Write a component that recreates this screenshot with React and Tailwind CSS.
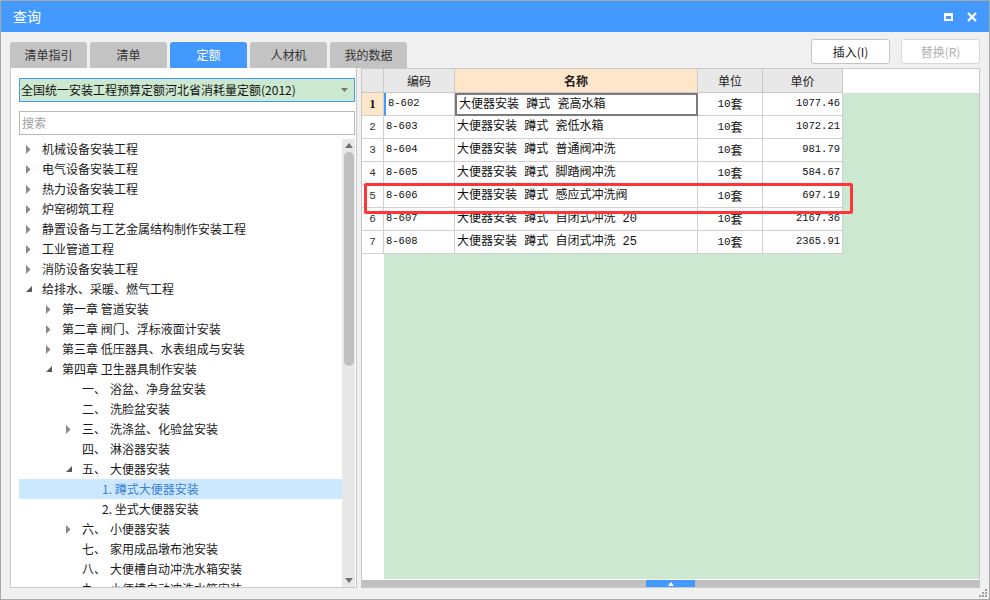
import React from "react";

const CJK = { fontFamily: '"Noto Sans CJK SC", "Noto Sans", sans-serif' };
const MONO = { fontFamily: '"Liberation Mono", "Noto Sans CJK SC", monospace' };

const tree = [
  { l: 0, a: "c", t: "机械设备安装工程" },
  { l: 0, a: "c", t: "电气设备安装工程" },
  { l: 0, a: "c", t: "热力设备安装工程" },
  { l: 0, a: "c", t: "炉窑砌筑工程" },
  { l: 0, a: "c", t: "静置设备与工艺金属结构制作安装工程" },
  { l: 0, a: "c", t: "工业管道工程" },
  { l: 0, a: "c", t: "消防设备安装工程" },
  { l: 0, a: "e", t: "给排水、采暖、燃气工程" },
  { l: 1, a: "c", t: "第一章 管道安装" },
  { l: 1, a: "c", t: "第二章 阀门、浮标液面计安装" },
  { l: 1, a: "c", t: "第三章 低压器具、水表组成与安装" },
  { l: 1, a: "e", t: "第四章 卫生器具制作安装" },
  { l: 2, a: "", p: "一、", t: "浴盆、净身盆安装" },
  { l: 2, a: "", p: "二、", t: "洗脸盆安装" },
  { l: 2, a: "c", p: "三、", t: "洗涤盆、化验盆安装" },
  { l: 2, a: "", p: "四、", t: "淋浴器安装" },
  { l: 2, a: "e", p: "五、", t: "大便器安装" },
  { l: 3, a: "", t: "1. 蹲式大便器安装", sel: true },
  { l: 3, a: "", t: "2. 坐式大便器安装" },
  { l: 2, a: "c", p: "六、", t: "小便器安装" },
  { l: 2, a: "", p: "七、", t: "家用成品墩布池安装" },
  { l: 2, a: "", p: "八、", t: "大便槽自动冲洗水箱安装" },
  { l: 2, a: "", p: "九、", t: "小便槽自动冲洗水箱安装" },
];

const rows = [
  ["8-602", "大便器安装 蹲式 瓷高水箱", "1077.46"],
  ["8-603", "大便器安装 蹲式 瓷低水箱", "1072.21"],
  ["8-604", "大便器安装 蹲式 普通阀冲洗", "981.79"],
  ["8-605", "大便器安装 蹲式 脚踏阀冲洗", "584.67"],
  ["8-606", "大便器安装 蹲式 感应式冲洗阀", "697.19"],
  ["8-607", "大便器安装 蹲式 自闭式冲洗 20", "2167.36"],
  ["8-608", "大便器安装 蹲式 自闭式冲洗 25", "2365.91"],
];

const tabs = ["清单指引", "清单", "定额", "人材机", "我的数据"];

function Arrow({ type }) {
  if (type === "c")
    return (
      <svg width="5" height="9" viewBox="0 0 5 9">
        <polygon points="0,0 4.5,4.5 0,9" fill="#8a8a8a" />
      </svg>
    );
  if (type === "e")
    return (
      <svg width="7" height="7" viewBox="0 0 7 7">
        <polygon points="6,0 6,6 0,6" fill="#5a5a5a" />
      </svg>
    );
  return null;
}

export default function App() {
  return (
    <div
      className="w-[990px] h-[600px] border border-[#a8a8a8] bg-[#f0f0f0] flex flex-col overflow-hidden"
      style={CJK}
    >
      {/* title bar */}
      <div className="h-[31px] shrink-0 bg-[#4499ff] flex items-center pl-[12px] pr-[12px] text-white">
        <span className="text-[14px]">查询</span>
        <div className="ml-auto flex items-center gap-[14px]">
          <div className="w-[9px] h-[8px] border-[2px] border-white border-t-[3px]" />
          <svg width="10" height="10" viewBox="0 0 10 10">
            <path d="M1 1 L9 9 M9 1 L1 9" stroke="#fff" strokeWidth="2.2" />
          </svg>
        </div>
      </div>

      {/* body */}
      <div className="flex-1 min-h-0 flex flex-col px-[9px] pb-[11px] relative">
        {/* top row */}
        <div className="h-[36px] shrink-0 flex">
          <div className="flex items-end gap-[3px]">
            {tabs.map((t) => (
              <div
                key={t}
                className={
                  "w-[77px] h-[26px] rounded-t-[3px] flex items-center justify-center text-[12px] " +
                  (t === "定额" ? "bg-[#4499ff] text-white" : "bg-[#c3c3c3] text-[#333]")
                }
              >
                {t}
              </div>
            ))}
          </div>
          <div className="ml-auto flex gap-[11px] mt-[7px] h-[25px]">
            <div className="w-[79px] h-[25px] bg-white border border-[#c4c4c4] rounded-[3px] flex items-center justify-center text-[12px] text-[#222]">
              插入(I)
            </div>
            <div className="w-[79px] h-[25px] bg-white border border-[#d8d8d8] rounded-[3px] flex items-center justify-center text-[12px] text-[#b0b0b0]">
              替换(R)
            </div>
          </div>
        </div>

        {/* bottom row */}
        <div className="flex-1 flex gap-[4px] min-h-0">
          {/* left panel */}
          <div className="w-[347px] bg-white border border-[#c8c8c8] border-t-0 flex flex-col pl-[8px] pr-[1px] min-h-0 overflow-hidden">
            <div className="mt-[10px] shrink-0 h-[24px] bg-[#cde8d0] border border-[#4499ff] flex items-center pl-[1px] pr-[6px] text-[12px] text-[#111]">
              <span>全国统一安装工程预算定额河北省消耗量定额(2012)</span>
              <svg className="ml-auto" width="7" height="4" viewBox="0 0 7 4">
                <polygon points="0,0 7,0 3.5,4" fill="#777" />
              </svg>
            </div>
            <div className="mt-[9px] shrink-0 h-[24px] bg-white border border-[#b8b8b8] flex items-center pl-[2px] text-[12px] text-[#a0a0a0]">
              搜索
            </div>
            <div className="mt-[4px] flex-1 flex min-h-0 overflow-hidden">
              <div className="flex-1 flex flex-col overflow-hidden">
                {tree.map((n, i) => (
                  <div
                    key={i}
                    className={
                      "h-[20px] shrink-0 flex items-center text-[12px] whitespace-nowrap " +
                      (n.sel ? "bg-[#cce8ff] text-[#3d7fd6]" : "text-[#1a1a1a]")
                    }
                    style={{ paddingLeft: n.l * 20 }}
                  >
                    <div className="w-[23px] shrink-0 flex items-center pl-[7px]">
                      <Arrow type={n.a} />
                    </div>
                    {n.p && <span className="w-[28px] shrink-0">{n.p}</span>}
                    <span>{n.t}</span>
                  </div>
                ))}
              </div>
              <div className="w-[13px] bg-[#e8e8e8] flex flex-col items-center shrink-0">
                <svg className="mt-[4px] shrink-0" width="8" height="5" viewBox="0 0 8 5">
                  <polygon points="0,5 8,5 4,0" fill="#707070" />
                </svg>
                <div className="mt-[4px] shrink-0 w-[10px] h-[214px] rounded-full bg-[#c0c0c0]" />
                <div className="flex-1" />
                <svg className="mb-[4px] shrink-0" width="8" height="5" viewBox="0 0 8 5">
                  <polygon points="0,0 8,0 4,5" fill="#707070" />
                </svg>
              </div>
            </div>
          </div>

          {/* right table */}
          <div className="flex-1 relative bg-white border border-[#c8c8c8] flex flex-col min-h-0">
            {/* header */}
            <div className="h-[24px] flex shrink-0 text-[12px] text-[#222]">
              <div className="w-[22px] h-full bg-[#e8e8e8] border-r border-b border-[#c8c8c8]" />
              <div className="w-[71px] h-full bg-[#e8e8e8] border-r border-b border-[#c8c8c8] flex items-center justify-center">编码</div>
              <div className="w-[243px] h-full bg-[#fde6c9] border-r border-b border-[#c8c8c8] flex items-center justify-center font-bold">名称</div>
              <div className="w-[65px] h-full bg-[#e8e8e8] border-r border-b border-[#c8c8c8] flex items-center justify-center">单位</div>
              <div className="w-[80px] h-full bg-[#e8e8e8] border-r border-b border-[#c8c8c8] flex items-center justify-center">单价</div>
              <div className="flex-1" />
            </div>
            {/* body */}
            <div className="flex-1 flex flex-col bg-[#cde8d0] min-h-0">
              {rows.map((r, i) => (
                <div key={i} className="h-[23px] flex shrink-0 text-[#111]">
                  <div
                    className={
                      "w-[22px] h-full border-r border-b border-[#d0d0d0] flex items-center justify-center " +
                      (i === 0 ? "bg-[#fde6c9] font-bold text-[12px]" : "bg-white text-[11px] text-[#333]")
                    }
                    style={i === 0 ? { fontFamily: '"Liberation Serif", serif' } : MONO}
                  >
                    {i + 1}
                  </div>
                  <div
                    className={
                      "w-[71px] h-full bg-white border-r border-b border-[#d0d0d0] flex items-center pl-[2px] text-[10.5px] " +
                      (i === 0 ? "border-l-2 border-l-[#4499ff] pl-0" : "")
                    }
                    style={MONO}
                  >
                    {r[0]}
                  </div>
                  <div
                    className={
                      "w-[243px] h-full bg-white flex items-center pl-[2px] text-[12px] whitespace-pre " +
                      (i === 0 ? "border-2 border-[#7a7a7a]" : "border-r border-b border-[#d0d0d0]")
                    }
                    style={MONO}
                  >
                    {r[1]}
                  </div>
                  <div className="w-[65px] h-full bg-white border-r border-b border-[#d0d0d0] flex items-center justify-center text-[12px]">
                    <span className="text-[11px]" style={MONO}>10</span>
                    <span>套</span>
                  </div>
                  <div
                    className="w-[80px] h-full bg-white border-r border-b border-[#d0d0d0] flex items-center justify-end pr-[2px] text-[10.5px]"
                    style={MONO}
                  >
                    {r[2]}
                  </div>
                </div>
              ))}
              <div className="flex-1 flex">
                <div className="w-[22px] bg-white" />
              </div>
              <div className="h-[1px] shrink-0 bg-white" />
            </div>
            {/* horizontal scrollbar */}
            <div className="h-[7px] bg-[#c0c0c0] flex justify-center shrink-0">
              <div className="w-[49px] h-full bg-[#4499ff] flex items-center justify-center">
                <svg width="6" height="4" viewBox="0 0 6 4">
                  <polygon points="0,4 6,4 3,0" fill="#fff" />
                </svg>
              </div>
            </div>
            {/* red annotation */}
            <div className="absolute left-[2px] top-[114px] w-[489px] h-[31px] border-[3px] border-[#ff3535] rounded-[2px]" />
          </div>
        </div>

        {/* resize grip */}
        <svg className="absolute right-[1px] bottom-[1px]" width="9" height="9" viewBox="0 0 9 9">
          <rect x="6" y="0" width="2" height="2" fill="#a0a0a0" />
          <rect x="3" y="3" width="2" height="2" fill="#a0a0a0" />
          <rect x="6" y="3" width="2" height="2" fill="#a0a0a0" />
          <rect x="0" y="6" width="2" height="2" fill="#a0a0a0" />
          <rect x="3" y="6" width="2" height="2" fill="#a0a0a0" />
          <rect x="6" y="6" width="2" height="2" fill="#a0a0a0" />
        </svg>
      </div>
    </div>
  );
}
